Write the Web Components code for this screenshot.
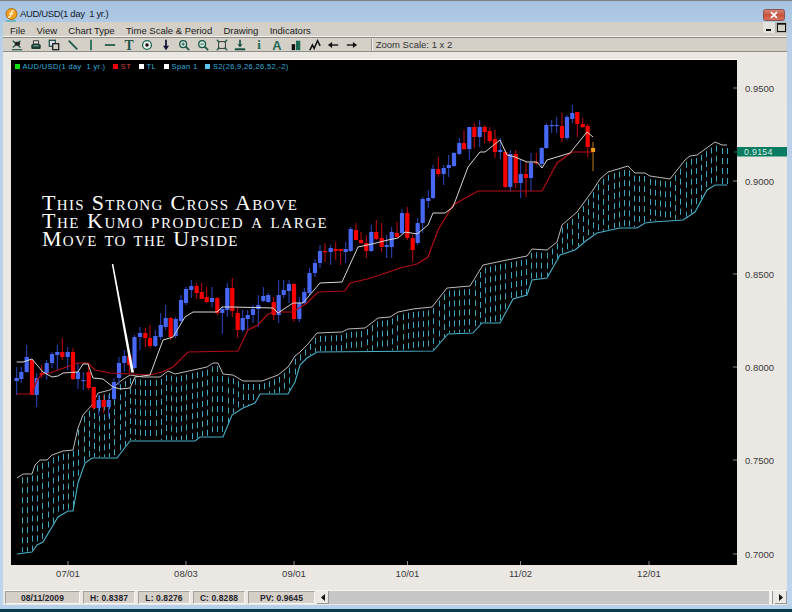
<!DOCTYPE html>
<html>
<head>
<meta charset="utf-8">
<title>AUD/USD</title>
<style>
	html, body { margin: 0; padding: 0; background: #ebe8e3; }
</style>
</head>
<body>
<chart-window>
	<title-bar slot="title">AUD/USD(1 day  1 yr.)</title-bar>
	<menu-bar slot="menu">
		<span>File</span><span>View</span><span>Chart Type</span><span>Time Scale &amp; Period</span><span>Drawing</span><span>Indicators</span>
	</menu-bar>
	<tool-bar slot="tools"></tool-bar>
	<price-chart slot="chart"></price-chart>
	<status-bar slot="status">
		<stat-cell style="width:75px">08/11/2009</stat-cell>
		<stat-cell style="width:52px">H: 0.8387</stat-cell>
		<stat-cell style="width:52px">L: 0.8276</stat-cell>
		<stat-cell style="width:52px">C: 0.8288</stat-cell>
		<stat-cell style="width:67px">PV: 0.9645</stat-cell>
	</status-bar>
</chart-window>

<script>
class ChartWindow extends HTMLElement {
	constructor() {
		super();
		this.attachShadow({ mode: 'open' });
		this.shadowRoot.innerHTML = `
			<style>
				:host {
					display: flex;
					flex-direction: column;
					width: 792px;
					height: 612px;
					overflow: hidden;
					font-family: "Liberation Sans", Arial, sans-serif;
					background: linear-gradient(180deg, #a6c2e0 0, #b9d0e8 40px, #bcd4ec 100%);
				}
				#top { height: 1px; background: #7d7f80; flex: none; }
				#frame {
					flex: 1;
					display: flex;
					flex-direction: column;
					margin: 0 5px 0 3px;
					min-height: 0;
				}
				#edge { height: 4px; flex: none; background: #b4d0ea; }
				#bottom { height: 3px; flex: none; background: #0b3c4c; }
			</style>
			<div id="top"></div>
			<slot name="title"></slot>
			<div id="frame">
				<slot name="menu"></slot>
				<slot name="tools"></slot>
				<slot name="chart"></slot>
				<slot name="status"></slot>
			</div>
			<div id="edge"></div>
			<div id="bottom"></div>
		`;
	}
}

class TitleBar extends HTMLElement {
	constructor() {
		super();
		this.attachShadow({ mode: 'open' });
		this.shadowRoot.innerHTML = `
			<style>
				:host {
					display: flex;
					align-items: center;
					height: 21px;
					flex: none;
					padding: 0 7px 0 5px;
					gap: 2px;
					font-size: 9.5px;
					letter-spacing: -0.35px;
					white-space: pre;
					color: #10202c;
				}
				svg { flex: none; display: block; }
				#logo { margin-top: 6px; }
				#text { flex: 1; margin-top: 4px; }
				#close { margin-top: 7px; }
			</style>
			<svg id="logo" width="13" height="14" viewBox="0 0 13 14">
				<circle cx="6.5" cy="6" r="5.5" fill="#f0a020" stroke="#b56d10"/>
				<path d="M8.8 2.8C6.6 2.4 6.4 4 6 6S5 9.6 3.2 9.2M4.5 5.6H8.4" fill="none" stroke="#fff6d8" stroke-width="1.3"/>
				<path d="M1 13h10" stroke="#28a8a0" stroke-width="1"/>
			</svg>
			<span id="text"><slot></slot></span>
			<svg id="close" width="22" height="12" viewBox="0 0 22 12">
				<defs><linearGradient id="red" x1="0" x2="0" y1="0" y2="1">
					<stop offset="0" stop-color="#d98878"/><stop offset="0.5" stop-color="#c8533f"/><stop offset="1" stop-color="#d8705c"/>
				</linearGradient></defs>
				<rect x="0.5" y="0.5" width="21" height="11" rx="2" fill="url(#red)" stroke="#8c5650"/>
				<path d="M8 3.2l6 5.6M14 3.2l-6 5.6" stroke="#fff" stroke-width="1.8"/>
			</svg>
		`;
	}
}

class MenuBar extends HTMLElement {
	constructor() {
		super();
		this.attachShadow({ mode: 'open' });
		this.shadowRoot.innerHTML = `
			<style>
				:host {
					display: flex;
					align-items: center;
					box-sizing: border-box;
					height: 16px;
					flex: none;
					padding-left: 7px;
					background: #d4d0c8;
					border-bottom: 1px solid #8e8c86;
					box-shadow: inset 0 -1px 0 #f4f2ee;
					font-size: 9.5px;
					color: #1c1c1c;
				}
				#items { display: flex; flex: 1; margin-top: 2px; }
				::slotted(span) { margin-right: 11.3px; }
				#buttons { display: flex; align-self: flex-start; }
				.btn { width: 12px; height: 11px; box-sizing: border-box; display: block; }
			</style>
			<div id="items"><slot></slot></div>
			<div id="buttons">
				<svg class="btn" viewBox="0 0 12 11"><rect width="12" height="11" fill="#e4e2dc"/><rect x="3" y="7" width="5" height="2" fill="#111"/></svg>
				<svg class="btn" viewBox="0 0 12 11"><rect width="12" height="11" fill="#b8b6ae"/><rect x="2.5" y="1.5" width="8" height="8" fill="#d4d0c8" stroke="#111"/><path d="M2 2h9" stroke="#111" stroke-width="1.4"/></svg>
			</div>
		`;
	}
}

const TOOL_ICONS = {
	chartx: '<path d="M2 2l9 8M11 2l-9 8" stroke="#1c5646" stroke-width="1.6" fill="none"/><path d="M7 3v5M5 4h5v3H5z" stroke="#222" fill="#222"/><path d="M1 12.5h12" stroke="#1c5646" stroke-width="1.4"/>',
	printer: '<path d="M4 2h6v4H4z" fill="#ddd" stroke="#222"/><path d="M1.5 7C2 5 12 5 12.500 7v4c0 1-11 1-11 0z" fill="#1d3a32"/><path d="M4 8h6" stroke="#8db" />',
	copy: '<rect x="1.500" y="1.500" width="7" height="7" fill="#dde" stroke="#16483c" stroke-width="1.400"/><rect x="5.500" y="5.500" width="7" height="7" fill="#d4d0c8" stroke="#111" stroke-width="1.400"/>',
	diag: '<path d="M2 2l10 10" stroke="#1c5646" stroke-width="2"/>',
	vert: '<path d="M7 1v12" stroke="#1c6a54" stroke-width="2"/>',
	horiz: '<path d="M1 7h12" stroke="#1c5646" stroke-width="2"/>',
	text: '<text x="7" y="12.500" text-anchor="middle" font-family="Liberation Serif" font-weight="700" font-size="16" fill="#1c5646">T</text>',
	circle: '<circle cx="7" cy="7" r="5.200" fill="#eee" stroke="#1c6a54" stroke-width="1.500"/><circle cx="7" cy="7" r="2" fill="#111"/>',
	down: '<path d="M7 1v8" stroke="#113" stroke-width="2"/><path d="M3.500 8h7L7 13z" fill="#113"/>',
	zoomin: '<circle cx="6" cy="6" r="4" fill="#cfe6de" stroke="#1c5646" stroke-width="1.500"/><path d="M4 6h4M6 4v4" stroke="#1c5646"/><path d="M9 9l4 4" stroke="#1c5646" stroke-width="2"/>',
	zoomout: '<circle cx="6" cy="6" r="4" fill="#cfe6de" stroke="#1c5646" stroke-width="1.500"/><path d="M4 6h4" stroke="#1c5646"/><path d="M9 9l4 4" stroke="#1c5646" stroke-width="2"/>',
	box: '<path d="M3 3h8v8H3z" fill="none" stroke="#222"/><path d="M1 1l3 3M13 1l-3 3M1 13l3-3M13 13l-3-3" stroke="#1c5646" stroke-width="1.600"/>',
	tray: '<path d="M7 1v7" stroke="#1c5646" stroke-width="2"/><path d="M4 6h6L7 10z" fill="#1c5646"/><path d="M1 12h12" stroke="#1c5646" stroke-width="2.400"/>',
	info: '<text x="7" y="12" text-anchor="middle" font-family="Liberation Serif" font-weight="700" font-size="15" fill="#1c6a54">i</text>',
	letter: '<text x="7" y="12.500" text-anchor="middle" font-family="Liberation Sans" font-weight="700" font-size="15" fill="#1c6a54">A</text>',
	bars: '<rect x="2" y="6" width="4" height="7" fill="#111"/><rect x="7" y="2" width="5" height="11" fill="#1c6a54"/>',
	zigzag: '<path d="M1 13l3-6 2 4 4-9 3 6" fill="none" stroke="#111" stroke-width="1.800"/>',
	left: '<path d="M5 7h8" stroke="#111" stroke-width="1.600"/><path d="M6 3.500v7L1 7z" fill="#111"/>',
	right: '<path d="M1 7h8" stroke="#111" stroke-width="1.600"/><path d="M8 3.500v7L13 7z" fill="#111"/>'
};

class ToolBar extends HTMLElement {
	constructor() {
		super();
		this.attachShadow({ mode: 'open' });
		const icons = Object.keys(TOOL_ICONS).map(name =>
			`<svg width="12" height="12" viewBox="0 0 14 14">${TOOL_ICONS[name]}</svg>`).join('');
		this.shadowRoot.innerHTML = `
			<style>
				:host {
					display: flex;
					align-items: center;
					box-sizing: border-box;
					height: 14px;
					flex: none;
					padding-left: 8px;
					background: #d4d0c8;
					border-bottom: 1px solid #8e8c86;
					font-size: 9.5px;
					color: #333;
				}
				#icons { display: flex; gap: 6.6px; }
				svg { display: block; flex: none; overflow: visible; }
				#sep {
					width: 1px;
					height: 12px;
					margin: 0 3px 0 13px;
					background: #9a978f;
					border-right: 1px solid #f4f2ee;
				}
			</style>
			<div id="icons">${icons}</div>
			<div id="sep"></div>
			<span>Zoom Scale: 1 x 2</span>
		`;
	}
}

// page coordinates, read off the screenshot: [x, wick top, wick bottom, body top, body bottom, colour]
const CANDLES = [
	[16.7,367,395,378,381,'b'],[21.3,367,383,372,379,'b'],[26.7,345,373,357,372,'b'],[32,360,395,360,395,'r'],
	[36.7,373,407,378,395,'b'],[41.7,365,378,373,375,'r'],[46.7,360,380,363,373,'b'],[52,352,368,354,363,'b'],
	[57.3,345,370,352,355,'b'],[62.3,338,360,352,357,'r'],[67.7,347,370,352,357,'b'],[73,348,380,352,379,'r'],
	[78,363,389,372,379,'b'],[83.3,372,390,380,381,'b'],[88.7,363,390,372,388,'r'],[93.7,387,410,387,408,'r'],
	[98.7,395,415,400,408,'b'],[103.7,395,413,400,407,'r'],[108.7,395,417,400,407,'b'],[114,378,400,382,399,'b'],
	[119,357,385,363,378,'b'],[124.3,350,372,356,363,'b'],[129.3,352,373,356,365,'r'],[134.5,335,369,337,368,'b'],
	[140,327,350,333,337,'b'],[145.3,328,347,333,338,'r'],[150,325,348,338,346,'r'],[155.3,330,347,336,346,'b'],
	[160.7,313,340,325,337,'b'],[165.7,305,330,318,327,'b'],[170.7,317,340,318,337,'r'],[175.7,317,338,319,336,'b'],
	[181,295,323,300,321,'b'],[186,287,305,289,303,'b'],[191.3,280,298,286,290,'b'],[196.7,283,299,286,293,'r'],
	[201.7,283,299,292,299,'r'],[206.7,287,303,297,302,'r'],[212,287,307,298,302,'b'],[217.3,297,315,298,313,'r'],
	[222.3,307,334,309,313,'b'],[227.3,283,317,288,310,'b'],[232.3,278,317,288,311,'r'],[237.7,307,338,313,330,'r'],
	[242.7,310,332,318,330,'b'],[247.7,310,332,315,319,'b'],[253,305,323,309,315,'b'],[258.3,295,327,305,309,'b'],
	[263.3,287,302,296,301,'b'],[268.3,293,303,295,302,'b'],[273.7,297,320,302,315,'r'],[278.7,280,323,295,315,'b'],
	[283.7,280,298,290,295,'b'],[289,280,303,284,291,'b'],[294,283,322,284,319,'r'],[299.3,297,322,303,319,'b'],
	[304.3,288,305,292,303,'b'],[309.5,268,295,273,293,'b'],[315,259,277,263,273,'b'],[320,245,268,251,263,'b'],
	[325,243,262,251,252,'r'],[330.7,245,265,248,252,'b'],[335.7,242,260,249,251,'r'],[340.7,249,265,249,251,'r'],
	[345.7,242,263,249,252,'b'],[350.7,227,252,229,251,'b'],[356,223,240,230,240,'r'],[361,232,244,240,243,'r'],
	[366.3,235,258,243,251,'r'],[371.3,225,252,232,251,'b'],[376.3,220,240,232,239,'r'],[381.7,223,252,238,247,'r'],
	[386.7,235,258,245,247,'b'],[391.7,227,258,232,247,'b'],[397,222,237,233,237,'r'],[402,209,234,213,233,'b'],
	[407.3,207,240,213,238,'r'],[412.7,235,262,238,250,'r'],[417.7,218,245,223,243,'b'],[422.7,197,233,199,223,'b'],
	[428.3,190,208,198,201,'b'],[433,165,199,169,198,'b'],[438.3,157,177,169,174,'r'],[443.7,165,185,168,174,'b'],
	[448.7,155,177,165,168,'b'],[454,152,167,153,166,'b'],[459.3,138,155,143,154,'b'],[464,130,150,143,149,'r'],
	[469.3,127,160,127,149,'b'],[474.3,123,148,127,137,'r'],[479.7,120,147,127,137,'b'],[484.7,125,143,127,132,'r'],
	[489.7,127,143,131,141,'r'],[495,130,158,139,152,'r'],[500.3,138,159,150,152,'b'],[505.3,150,188,152,187,'r'],
	[510.3,150,192,154,187,'b'],[515.7,150,188,154,183,'r'],[520.7,160,198,174,183,'b'],[526,162,197,174,178,'r'],
	[531,153,191,163,178,'b'],[536.3,153,165,162,163,'r'],[541.7,147,168,148,164,'b'],[546.3,123,149,125,148,'b'],
	[551.7,120,133,125,126,'b'],[556.7,117,133,125,126,'b'],[562,113,142,126,138,'r'],[567,115,140,117,138,'b'],
	[572.3,105,123,113,119,'b'],[577.3,112,137,112,124,'r'],[582.7,118,128,124,127,'r'],[587.7,124,157,126,147,'r'],
	[593,142,171,148,152,'o']
];

const TL_LINE = [[16.7,362],[23,362],[32,359],[37,365],[43,372],[52,377],[58,376],[63,373],[78,372],[83,364],[88,364],[93,378],[103,379],[113,387],[120,389],[130,388],[135,377],[150,375],[163,340],[173,337],[185,317],[193,312],[217,312],[222,307],[233,307],[273,308],[278,313],[293,303],[303,303],[320,283],[342,282],[358,247],[372,244],[388,240],[398,238],[405,232],[417,234],[428,225],[433,213],[445,213],[453,207],[468,167],[480,152],[485,152],[500,140],[507,155],[515,157],[527,162],[537,162],[542,168],[547,160],[570,153],[587,132],[593,137]];

const ST_LINE = [[16.7,394],[32,394],[37,380],[42,374],[50,373],[72,365],[78,363],[88,363],[95,370],[110,373],[130,374],[150,375],[162,372],[173,367],[188,352],[238,351],[248,330],[258,325],[267,315],[273,312],[293,312],[307,303],[318,292],[345,291],[350,283],[367,279],[380,275],[400,268],[417,264],[428,257],[438,230],[453,205],[478,191],[542,191],[557,163],[572,152],[592,152]];

const SPAN_TOP = [[17,478],[23,474],[32,474],[35,465],[40,460],[47,460],[52,455],[63,451],[73,450],[78,428],[83,415],[92,405],[98,393],[110,390],[122,380],[130,375],[143,377],[160,377],[168,371],[175,374],[207,367],[213,363],[218,363],[223,374],[233,375],[243,381],[262,381],[278,375],[288,367],[295,356],[300,352],[307,345],[317,333],[342,332],[348,329],[365,328],[378,318],[390,317],[398,312],[413,309],[432,307],[447,288],[470,286],[483,265],[507,260],[527,256],[532,249],[547,250],[557,242],[562,225],[577,212],[593,190],[600,179],[608,172],[628,166],[635,173],[645,173],[650,176],[670,179],[685,160],[690,156],[697,155],[715,142],[722,145],[727,145]];

const SPAN_BOTTOM = [[17,554],[32,552],[37,545],[43,542],[58,517],[68,511],[73,511],[78,483],[85,463],[92,458],[117,458],[130,441],[195,441],[200,437],[223,437],[232,415],[243,408],[255,403],[260,394],[288,394],[295,382],[300,365],[307,358],[317,352],[433,351],[448,334],[473,333],[482,323],[500,323],[513,299],[527,295],[532,280],[547,278],[560,255],[575,250],[587,240],[597,233],[620,228],[637,228],[645,223],[653,222],[683,220],[695,212],[707,190],[715,185],[727,185]];

const PRICE_LABELS = [[88,'0.9500'],[181,'0.9000'],[274,'0.8500'],[367,'0.8000'],[460,'0.7500'],[554,'0.7000']];
const DATE_LABELS = [[68,'07/01'],[186,'08/03'],[294,'09/01'],[407.5,'10/01'],[520.5,'11/02'],[649,'12/01']];

function pathOf(points) {
	return 'M' + points.map(p => p.join(' ')).join('L');
}

function valueAt(points, x) {
	for (let i = 1; i < points.length; i++) {
		if (x <= points[i][0]) {
			const [x0, y0] = points[i - 1];
			const [x1, y1] = points[i];
			return y0 + (y1 - y0) * (x - x0) / (x1 - x0);
		}
	}
	return points[points.length - 1][1];
}

class PriceChart extends HTMLElement {
	constructor() {
		super();
		this.attachShadow({ mode: 'open' });

		// Kumo dashes, one column per bar
		let dashes = '';
		for (let i = 1; i <= 138; i++) {
			const x = Math.round(16.7 + i * 5.145) + 0.5;
			const top = valueAt(SPAN_TOP, x) + 3;
			const bottom = valueAt(SPAN_BOTTOM, x) - 1;
			if (bottom > top) dashes += `<path d="M${x} ${top}V${bottom}"/>`;
		}

		const fills = { b: '#4668f4', r: '#f80000', o: '#f09818' };
		const wicks = { b: '#2f48c8', r: '#c80808', o: '#c07c10' };
		const candles = CANDLES.map(([x, hi, lo, top, bot, c]) => `
			<path d="M${x} ${hi}V${lo}" stroke="${wicks[c]}" stroke-width="1"/>
			<rect x="${x - 2.1}" y="${top}" width="4.2" height="${Math.max(bot - top, 1.2)}" fill="${fills[c]}"/>`).join('');

		const priceAxis = PRICE_LABELS.map(([y, label]) => `
			<path d="M733 ${y}H737" stroke="#888"/>
			<text x="745" y="${y + 3.5}">${label}</text>`).join('');
		const dateAxis = DATE_LABELS.map(([x, label]) => `
			<path d="M${x} 561V565" stroke="#888"/>
			<text x="${x}" y="577" text-anchor="middle">${label}</text>`).join('');

		this.shadowRoot.innerHTML = `
			<style>
				:host {
					display: block;
					position: relative;
					width: 784px;
					height: 538px;
					flex: none;
					background: #ebe8e3;
				}
				svg { display: block; position: absolute; left: 0; top: 0; }
				text { font: 9.5px "Liberation Sans", Arial, sans-serif; fill: #3a3a3a; }
				#tag { font-size: 8.8px; letter-spacing: 0.3px; fill: #d8efe6; }
				#legend {
					position: absolute;
					left: 12px;
					top: 10px;
					display: flex;
					align-items: center;
					font-size: 7.5px;
					letter-spacing: 0.35px;
					white-space: pre;
					color: #33aedb;
				}
				#legend i { width: 4.500px; height: 4.500px; margin-right: 3px; flex: none; }
				#legend span { margin-right: 8px; }
				#note {
					position: absolute;
					left: 39px;
					top: 142px;
					font: 22px/17.8px "Liberation Serif", "Times New Roman", serif;
					font-variant: small-caps;
					color: #fff;
					white-space: pre;
				}
				#note div:nth-child(1) { letter-spacing: 1.33px; }
				#note div:nth-child(2) { letter-spacing: 1.53px; }
				#note div:nth-child(3) { letter-spacing: 1.3px; }
			</style>
			<svg width="784" height="538" viewBox="3 52 784 538">
				<rect x="11" y="59" width="726" height="1" fill="#fafafa"/>
				<rect x="11" y="60" width="726" height="505" fill="#000"/>
				<path d="${pathOf(SPAN_BOTTOM)}" fill="none" stroke="#48b0c8" stroke-width="1.100"/>
				<g stroke="#3fa8c0" stroke-width="1" stroke-dasharray="6 4" fill="none">${dashes}</g>
				<path d="${pathOf(SPAN_TOP)}" fill="none" stroke="#b8bcbc" stroke-width="1"/>
				${candles}
				<path d="${pathOf(ST_LINE)}" fill="none" stroke="#b40c14" stroke-width="1.200"/>
				<path d="${pathOf(TL_LINE)}" fill="none" stroke="#d8d8d8" stroke-width="1"/>
				<polygon points="111.800,264 113.300,264 134,372.500 131.200,372.500" fill="#fff"/>
				${priceAxis}
				${dateAxis}
				<rect x="737" y="147" width="50" height="9.500" fill="#0a7c62"/>
				<path d="M734 152H737" stroke="#0a7c62"/>
				<text id="tag" x="744" y="155">0.9154</text>
			</svg>
			<div id="legend">
				<i style="background:#10e010"></i><span>AUD/USD(1 day  1 yr.)</span>
				<i style="background:#f00000"></i><span style="color:#d04040">ST</span>
				<i style="background:#fff"></i><span>TL</span>
				<i style="background:#fff"></i><span>Span 1</span>
				<i style="background:#58c8f0"></i><span>S2(26,9,26,26,52,-2)</span>
			</div>
			<div id="note"><div>This Strong Cross Above</div><div>The Kumo produced a large</div><div>Move to the Upside</div></div>
		`;
	}
}

class StatCell extends HTMLElement {
	constructor() {
		super();
		this.attachShadow({ mode: 'open' });
		this.shadowRoot.innerHTML = `
			<style>
				:host {
					display: flex;
					align-items: center;
					justify-content: center;
					box-sizing: border-box;
					height: 13px;
					flex: none;
					background: #d4d0c8;
					border-top: 1px solid #a4a19a;
					border-left: 1px solid #a4a19a;
					border-bottom: 1px solid #f8f6f2;
					border-right: 1px solid #f8f6f2;
					font-size: 8.5px;
					letter-spacing: 0.1px;
					font-weight: 700;
					color: #24242c;
				}
			</style>
			<slot></slot>
		`;
	}
}

class StatusBar extends HTMLElement {
	constructor() {
		super();
		this.attachShadow({ mode: 'open' });
		this.shadowRoot.innerHTML = `
			<style>
				:host {
					display: flex;
					align-items: flex-start;
					gap: 3px;
					height: 15px;
					flex: none;
					padding: 0 0 0 2px;
					box-sizing: border-box;
					background: #ebe8e3;
					border-top: 1px solid #f8f6f2;
				}
				#scroll {
					flex: 1;
					display: flex;
					height: 13px;
					margin-left: -1px;
				}
				.arrow {
					width: 12px;
					flex: none;
					display: flex;
					align-items: center;
					justify-content: center;
					background: #ece9e4;
					border-right: 1px solid #999;
					border-bottom: 1px solid #999;
					box-sizing: border-box;
				}
				#track { flex: 1; background: #c6c6c6; }
				#thumb { width: 4px; flex: none; background: #f4f2ee; border-right: 1px solid #999; box-sizing: border-box; }
				#gap { width: 2px; flex: none; background: #ebe8e3; }
			</style>
			<slot></slot>
			<div id="scroll">
				<div class="arrow"><svg width="4" height="7"><path d="M4 0v7L0 3.500z" fill="#111"/></svg></div>
				<div id="track"></div>
				<div id="thumb"></div>
				<div id="gap"></div>
				<div class="arrow"><svg width="4" height="7"><path d="M0 0v7L4 3.500z" fill="#111"/></svg></div>
			</div>
		`;
	}
}

customElements.define('chart-window', ChartWindow);
customElements.define('title-bar', TitleBar);
customElements.define('menu-bar', MenuBar);
customElements.define('tool-bar', ToolBar);
customElements.define('price-chart', PriceChart);
customElements.define('stat-cell', StatCell);
customElements.define('status-bar', StatusBar);
</script>
</body>
</html>
